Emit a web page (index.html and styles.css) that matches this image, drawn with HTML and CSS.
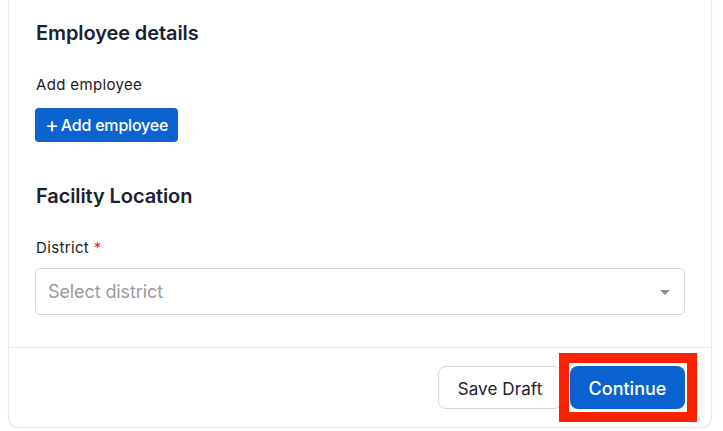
FILE: index.html
```html
<!DOCTYPE html>
<html>
<head>
<meta charset="utf-8">
<link rel="stylesheet" href="styles.css">
</head>
<body>
<div class="card">
  <div class="content">
    <section class="section">
      <h2 class="section-title">Employee details</h2>
      <div class="field-label">Add employee</div>
      <button class="btn-add"><span class="plus">+</span>Add employee</button>
    </section>
    <section class="section section-location">
      <h2 class="section-title">Facility Location</h2>
      <div class="field-label">District <span class="req">*</span></div>
      <div class="select">
        <span class="placeholder">Select district</span>
        <span class="caret"></span>
      </div>
    </section>
  </div>
  <div class="footer">
    <button class="btn-secondary">Save Draft</button>
    <button class="btn-primary highlighted">Continue</button>
  </div>
</div>
</body>
</html>
```

FILE: styles.css
```css
* { box-sizing: border-box; }
html, body { margin: 0; padding: 0; background: #ffffff; }
body {
  padding: 0 11px 0 8px;
  font-family: "Inter", "Liberation Sans", sans-serif;
  color: #1b2130;
}
.card {
  border: 1px solid #e6e8ec;
  border-top: none;
  border-radius: 0 0 10px 10px;
  background: #fff;
  box-shadow: 0 1px 2px rgba(16, 24, 40, 0.04);
  height: 428px;
  display: flex;
  flex-direction: column;
}
.content {
  padding: 21px 26px 32px 26px;
  border-bottom: 1px solid #e8eaee;
}
.section { display: flex; flex-direction: column; align-items: flex-start; }
.section-location { margin-top: 42px; }
.section-title {
  margin: 0;
  padding-left: 1px;
  font-size: 20px;
  line-height: 24px;
  font-weight: 600;
  color: #1b2130;
  letter-spacing: -0.1px;
}
.field-label {
  margin-top: 30px;
  padding-left: 1px;
  font-size: 15px;
  line-height: 20px;
  color: #1a1a1a;
  letter-spacing: 0.35px;
}
.req { color: #e0243a; }
.btn-add {
  margin-top: 13px;
  height: 34px;
  width: 143px;
  padding: 0 8px 0 10px;
  border: none;
  border-radius: 4px;
  background: #0b63cf;
  color: #fff;
  font-family: inherit;
  font-size: 16px;
  font-weight: 500;
  letter-spacing: -0.2px;
  display: flex;
  align-items: center;
  gap: 2px;
}
.plus { font-size: 21px; font-weight: 400; line-height: 1; margin-top: -2px; }
.select {
  margin-top: 10px;
  width: 100%;
  height: 47px;
  border: 1px solid #d4d8de;
  border-radius: 5px;
  display: flex;
  align-items: center;
  justify-content: space-between;
  padding: 0 14px 0 12px;
}
.placeholder { font-size: 18px; color: #9a9a9a; letter-spacing: -0.1px; }
.caret {
  width: 0; height: 0;
  border-left: 5px solid transparent;
  border-right: 5px solid transparent;
  border-top: 5px solid #8c8c8c;
  margin-top: 2px;
}
.footer {
  flex: 1;
  display: flex;
  justify-content: flex-end;
  align-items: flex-start;
  gap: 8px;
  padding: 18px 26px 0 0;
}
.btn-secondary, .btn-primary {
  height: 43px;
  border-radius: 8px;
  font-family: inherit;
  padding: 2px 0 0;
}
.btn-secondary {
  width: 124px;
  background: #fff;
  border: 1px solid #d4d8de;
  color: #1b2130;
  font-size: 17px;
  letter-spacing: 0.1px;
}
.btn-primary {
  width: 115px;
  background: #0b63cf;
  border: none;
  color: #fff;
  font-size: 18px;
  font-weight: 500;
  letter-spacing: 0;
}
.highlighted { position: relative; }
.highlighted::after {
  content: "";
  position: absolute;
  top: -13px; bottom: -13px; left: -11px; right: -12px;
  border: 10px solid #ff2200;
}
```
